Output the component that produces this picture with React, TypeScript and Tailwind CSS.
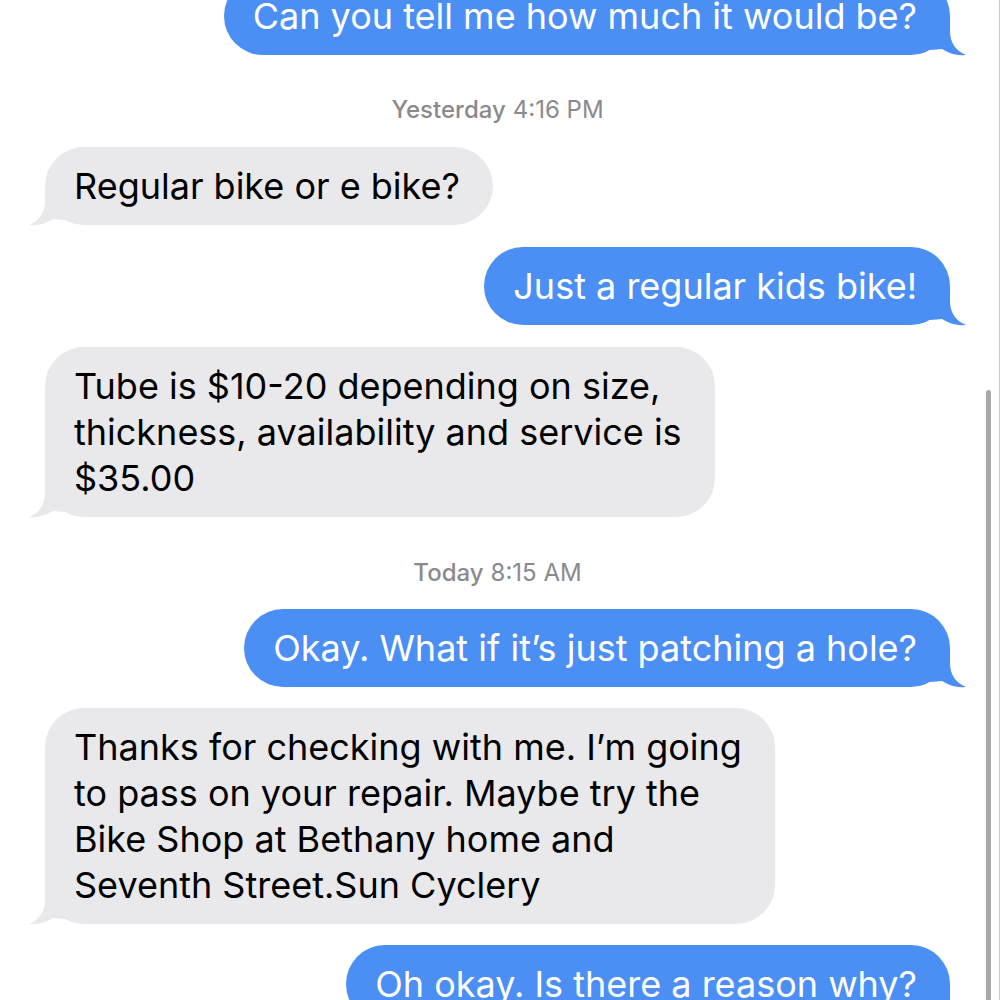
import React from 'react';

type Msg =
  | { kind: 'time'; day: string; time: string; cls: string }
  | { kind: 'out' | 'in'; lines: string[]; cls: string };

const messages: Msg[] = [
  { kind: 'out', lines: ['Can you tell me how much it would be?'], cls: '-mt-[23px]' },
  { kind: 'time', day: 'Yesterday', time: '4:16 PM', cls: 'mt-[41px] mb-[23px]' },
  { kind: 'in', lines: ['Regular bike or e bike?'], cls: '' },
  { kind: 'out', lines: ['Just a regular kids bike!'], cls: 'mt-[22px]' },
  {
    kind: 'in',
    lines: ['Tube is $10-20 depending on size,', 'thickness, availability and service is', '$35.00'],
    cls: 'mt-[22px]',
  },
  { kind: 'time', day: 'Today', time: '8:15 AM', cls: 'mt-[42px] mb-[22px]' },
  { kind: 'out', lines: ['Okay. What if it\u2019s just patching a hole?'], cls: '' },
  {
    kind: 'in',
    lines: [
      'Thanks for checking with me. I\u2019m going',
      'to pass on your repair. Maybe try the',
      'Bike Shop at Bethany home and',
      'Seventh Street.Sun Cyclery',
    ],
    cls: 'mt-[21px]',
  },
  { kind: 'out', lines: ['Oh okay. Is there a reason why?'], cls: 'mt-[21px]' },
];

function Tail({ side, color }: { side: 'left' | 'right'; color: string }) {
  return (
    <svg
      width="36"
      height="40"
      viewBox="0 0 36 40"
      className={
        side === 'right'
          ? 'absolute right-[-16px] bottom-[-2px]'
          : 'absolute left-[-16px] bottom-[-2px] -scale-x-100'
      }
    >
      <path d="M20 0 L20 14 C20 26 26 34 36 38 C28 39 20 37 12 32 L0 33 L0 0 Z" fill={color} />
    </svg>
  );
}

export default function App() {
  return (
    <div
      className="relative w-[1000px] h-[1000px] overflow-hidden bg-white"
      style={{ fontFamily: 'Inter, "Noto Sans", sans-serif' }}
    >
      <div className="flex flex-col pl-[45px] pr-[50px]">
        {messages.map((m, i) => {
          if (m.kind === 'time') {
            return (
              <div key={i} className={`${m.cls} h-[28px] flex items-center justify-center text-[24px] text-[#8a8a8e]`}>
                <span className="font-medium">{m.day}</span>
                <span className="ml-[7px]">{m.time}</span>
              </div>
            );
          }
          const out = m.kind === 'out';
          const color = out ? '#4b8ff4' : '#e9e9eb';
          return (
            <div key={i} className={`${m.cls} flex ${out ? 'justify-end' : 'justify-start'}`}>
              <div
                className={`relative rounded-[39px] pl-[29px] pr-[33px] py-[16px] text-[36px] leading-[46px] tracking-[0px] ${
                  out ? 'bg-[#4b8ff4] text-white' : 'bg-[#e9e9eb] text-black'
                }`}
              >
                <Tail side={out ? 'right' : 'left'} color={color} />
                <div className="relative">
                  {m.lines.map((l, j) => (
                    <div key={j} className="whitespace-nowrap">
                      {l}
                    </div>
                  ))}
                </div>
              </div>
            </div>
          );
        })}
      </div>
      <div className="absolute right-[9px] top-[390px] w-[5px] h-[640px] rounded-full bg-[#a9a9a9]" />
      <div className="absolute right-0 top-0 w-[1px] h-full bg-[#c9c9c9]" />
    </div>
  );
}
